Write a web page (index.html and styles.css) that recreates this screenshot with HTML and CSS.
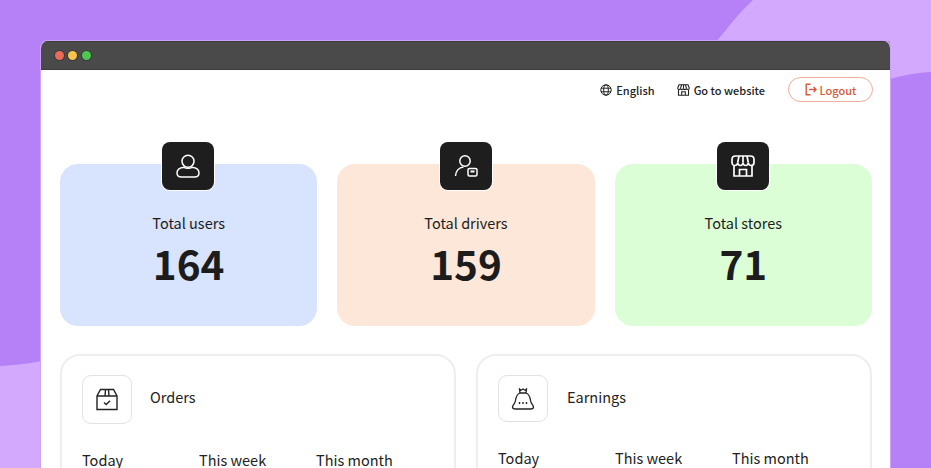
FILE: index.html
```html
<!DOCTYPE html>
<html lang="en">
<head>
    <meta charset="UTF-8">
    <title>Dashboard</title>
    <link rel="stylesheet" href="styles.css">
</head>
<body>
    <svg class="backdrop" width="931" height="468" viewBox="0 0 931 468">
        <path fill="#d3a9fd" d="M717 41C728 27 740 12 753 0H931V72C915 73 900 76 890 79V41Z"/>
        <path fill="#d3a9fd" d="M0 366C14 365 28 364 41 361V468H0Z"/>
    </svg>

    <div class="window">
        <div class="titlebar">
            <span class="dot red"></span>
            <span class="dot yellow"></span>
            <span class="dot green"></span>
        </div>

        <div class="content">
            <div class="topbar">
                <a class="top-link lang">
                    <svg width="12" height="12" viewBox="0 0 12 12" fill="none" stroke="#222" stroke-width="1">
                        <circle cx="6" cy="6" r="5.2"/>
                        <ellipse cx="6" cy="6" rx="2.3" ry="5.2"/>
                        <path d="M1 4.2H11M1 7.8H11"/>
                    </svg>
                    English
                </a>
                <a class="top-link">
                    <svg width="13" height="12" viewBox="0 0 13 12" fill="none" stroke="#222" stroke-width="1.1">
                        <path d="M2 .8H11L12.3 4C12.3 6 9.8 6 9.5 4.4C9.2 6 6.8 6 6.5 4.4C6.2 6 3.8 6 3.5 4.4C3.2 6 .7 6 .7 4Z"/>
                        <path d="M4.5 .8L3.5 4.4M8.5 .8L9.5 4.4M6.5 .8V4.4"/>
                        <path d="M1.5 5.8V11.2H11.5V5.8M4.7 11.2V7.8H8.3V11.2"/>
                    </svg>
                    Go to website
                </a>
                <button class="logout">
                    <svg width="12" height="13" viewBox="0 0 12 13" fill="none" stroke="#d9583b" stroke-width="1.4">
                        <path d="M5.5 1.2H1.2V11.8H5.5M4.2 6.5H11M8.6 4L11 6.5L8.6 9"/>
                    </svg>
                    Logout
                </button>
            </div>

            <div class="stats">
                <div class="stat blue">
                    <div class="stat-icon">
                        <svg width="24" height="24" viewBox="0 0 24 24" fill="none" stroke="#fff" stroke-width="1.5">
                            <circle cx="12" cy="7.2" r="6"/>
                            <path d="M8 13.2C9.5 14.6 14.5 14.6 16 13.2C20 13.6 23 15.8 23 19C23 21.6 21 23 18.5 23H5.5C3 23 1 21.6 1 19C1 15.8 4 13.6 8 13.2Z"/>
                        </svg>
                    </div>
                    <div class="stat-label">Total users</div>
                    <div class="stat-value">164</div>
                </div>
                <div class="stat peach">
                    <div class="stat-icon">
                        <svg width="24" height="24" viewBox="0 0 24 24" fill="none" stroke="#fff" stroke-width="1.5">
                            <circle cx="11" cy="7" r="5.2"/>
                            <path d="M1.5 22C1.8 17 5 13.5 9.5 13"/>
                            <rect x="14" y="14.5" width="9" height="7.5" rx="1.5"/>
                            <path d="M16.5 17.5H20.5" stroke-width="2"/>
                        </svg>
                    </div>
                    <div class="stat-label">Total drivers</div>
                    <div class="stat-value">159</div>
                </div>
                <div class="stat mint">
                    <div class="stat-icon">
                        <svg width="24" height="24" viewBox="0 0 24 24" fill="none" stroke="#fff" stroke-width="1.7">
                            <path d="M4.5 2H19.5C21.5 2 23 3.5 23 5.5V8.5C23 12.5 17.6 12.5 17.3 8.5C17 12.5 12.3 12.5 12 8.5C11.7 12.5 7 12.5 6.7 8.5C6.4 12.5 1 12.5 1 8.5V5.5C1 3.5 2.5 2 4.5 2Z"/>
                            <path d="M8 2L6.7 8.5M16 2L17.3 8.5M12 2V8.5"/>
                            <path d="M3 12V22H21V12M8.5 22V15.5H15.5V22"/>
                        </svg>
                    </div>
                    <div class="stat-label">Total stores</div>
                    <div class="stat-value">71</div>
                </div>
            </div>

            <div class="panels">
                <div class="panel">
                    <div class="panel-head">
                        <div class="panel-icon">
                            <svg width="22" height="23" viewBox="0 0 22 23" fill="none" stroke="#222" stroke-width="1.4">
                                <path d="M4.5 1.5H17.5L21 8V21.5H1V8Z"/>
                                <path d="M1 8H21M9.5 1.5L9 8M12.5 1.5L13 8"/>
                                <path d="M8 14.5L10.2 16.5L14 12.8"/>
                            </svg>
                        </div>
                        <span class="panel-title">Orders</span>
                    </div>
                    <div class="periods">
                        <span>Today</span>
                        <span>This week</span>
                        <span>This month</span>
                    </div>
                </div>
                <div class="panel earnings">
                    <div class="panel-head">
                        <div class="panel-icon">
                            <svg width="24" height="22" viewBox="0 0 24 22" fill="none" stroke="#222" stroke-width="1.3">
                                <path d="M8.5 1L10 2.2L12 1L14 2.2L15.5 1L15 5H9Z"/>
                                <path d="M9 5C6 6 5 9 4.5 12.500C4 16 1.500 17 1.500 19C1.500 20.500 2.800 21 4.500 21H19.500C21.200 21 22.500 20.500 22.500 19C22.500 17 20 16 19.500 12.500C19 9 18 6 15 5"/>
                                <path d="M7.800 15H9.200M11.300 15H12.700M14.800 15H16.200" stroke-width="1.8"/>
                            </svg>
                        </div>
                        <span class="panel-title">Earnings</span>
                    </div>
                    <div class="periods">
                        <span>Today</span>
                        <span>This week</span>
                        <span>This month</span>
                    </div>
                </div>
            </div>
        </div>
    </div>
</body>
</html>
```

FILE: styles.css
```css
*{
    margin: 0;
    padding: 0;
    box-sizing: border-box;
}

html, body{
    height: 468px;
    overflow: hidden;
}

body{
    position: relative;
    background: #b680f6;
    font-family: "Noto Sans CJK JP", "Noto Sans", sans-serif;
    color: #1c1c1c;
    padding: 40px 40px 0 40px;
}

.backdrop{
    position: absolute;
    left: 0;
    top: 0;
}

.window{
    position: relative;
    width: 851px;
    height: 428px;
    border: 1px solid #cba2fa;
    border-bottom: 0;
    border-radius: 8px 8px 0 0;
    overflow: hidden;
    background: #fff;
}

.titlebar{
    display: flex;
    align-items: center;
    gap: 4.5px;
    height: 29px;
    padding-left: 13.5px;
    padding-bottom: 1px;
    background: #4a4a4a;
    border-top: 1px solid #3c3c3c;
    border-bottom: 1px solid #3c3c3c;
}

.dot{
    width: 9px;
    height: 9px;
    border-radius: 50%;
    box-shadow: 0 0 0 1px #3a3a3a;
}
.red{
    background: #e86a58;
}
.yellow{
    background: #f8c24c;
}
.green{
    background: #4fc650;
}

.content{
    padding: 0 18px 0 19px;
}

.topbar{
    display: flex;
    justify-content: flex-end;
    align-items: center;
    height: 40px;
    margin-bottom: 32px;
}

.top-link{
    display: flex;
    align-items: center;
    gap: 4px;
    margin-right: 23px;
    font-size: 11px;
    font-weight: 500;
    color: #222;
}
.lang{
    margin-right: 22px;
}

.logout{
    display: flex;
    align-items: center;
    justify-content: center;
    gap: 3px;
    width: 85px;
    height: 25px;
    margin-top: -1px;
    margin-right: -1px;
    background: #fff;
    border: 1.5px solid #f0ad9a;
    border-radius: 13px;
    font-family: inherit;
    font-size: 11px;
    font-weight: 500;
    color: #d9583b;
}

.stats{
    display: flex;
    gap: 20px;
    padding-top: 22px;
}

.stat{
    position: relative;
    flex: 1;
    height: 162px;
    border-radius: 18px;
    text-align: center;
    padding-top: 48px;
}
.blue{
    background: #d8e3fe;
}
.peach{
    background: #fde7d8;
}
.mint{
    background: #dcfed6;
}

.stat-icon{
    position: absolute;
    left: calc(50% - 26.2px);
    top: -22px;
    display: flex;
    align-items: center;
    justify-content: center;
    width: 52px;
    height: 48px;
    background: #1e1e1e;
    border-radius: 8px;
    box-shadow: 0 0 0 1px #fff;
}

.stat-label{
    font-size: 14.5px;
    line-height: 22px;
}

.stat-value{
    margin-top: 6px;
    font-size: 40.5px;
    font-weight: 700;
    line-height: 46px;
}

.panels{
    display: flex;
    gap: 20px;
    margin-top: 28px;
}

.panel{
    flex: 1;
    height: 160px;
    border: 2px solid #eeeeee;
    border-radius: 20px;
    padding: 19px 20px 0 20px;
}

.panel-head{
    display: flex;
    align-items: center;
    gap: 18px;
}

.panel-icon{
    display: flex;
    align-items: center;
    justify-content: center;
    width: 50px;
    height: 49px;
    border: 1px solid #e2e2e2;
    border-radius: 9px;
}

.panel-title{
    margin-bottom: 6px;
    font-size: 14.5px;
    color: #222;
}

.periods{
    display: flex;
    margin-top: 25px;
    font-size: 14.5px;
    line-height: 22px;
    color: #222;
}
.periods span{
    width: 117px;
}

.earnings .panel-icon{
    height: 47px;
}
.earnings .panel-title{
    margin-bottom: 5px;
    margin-left: 1px;
}
```
